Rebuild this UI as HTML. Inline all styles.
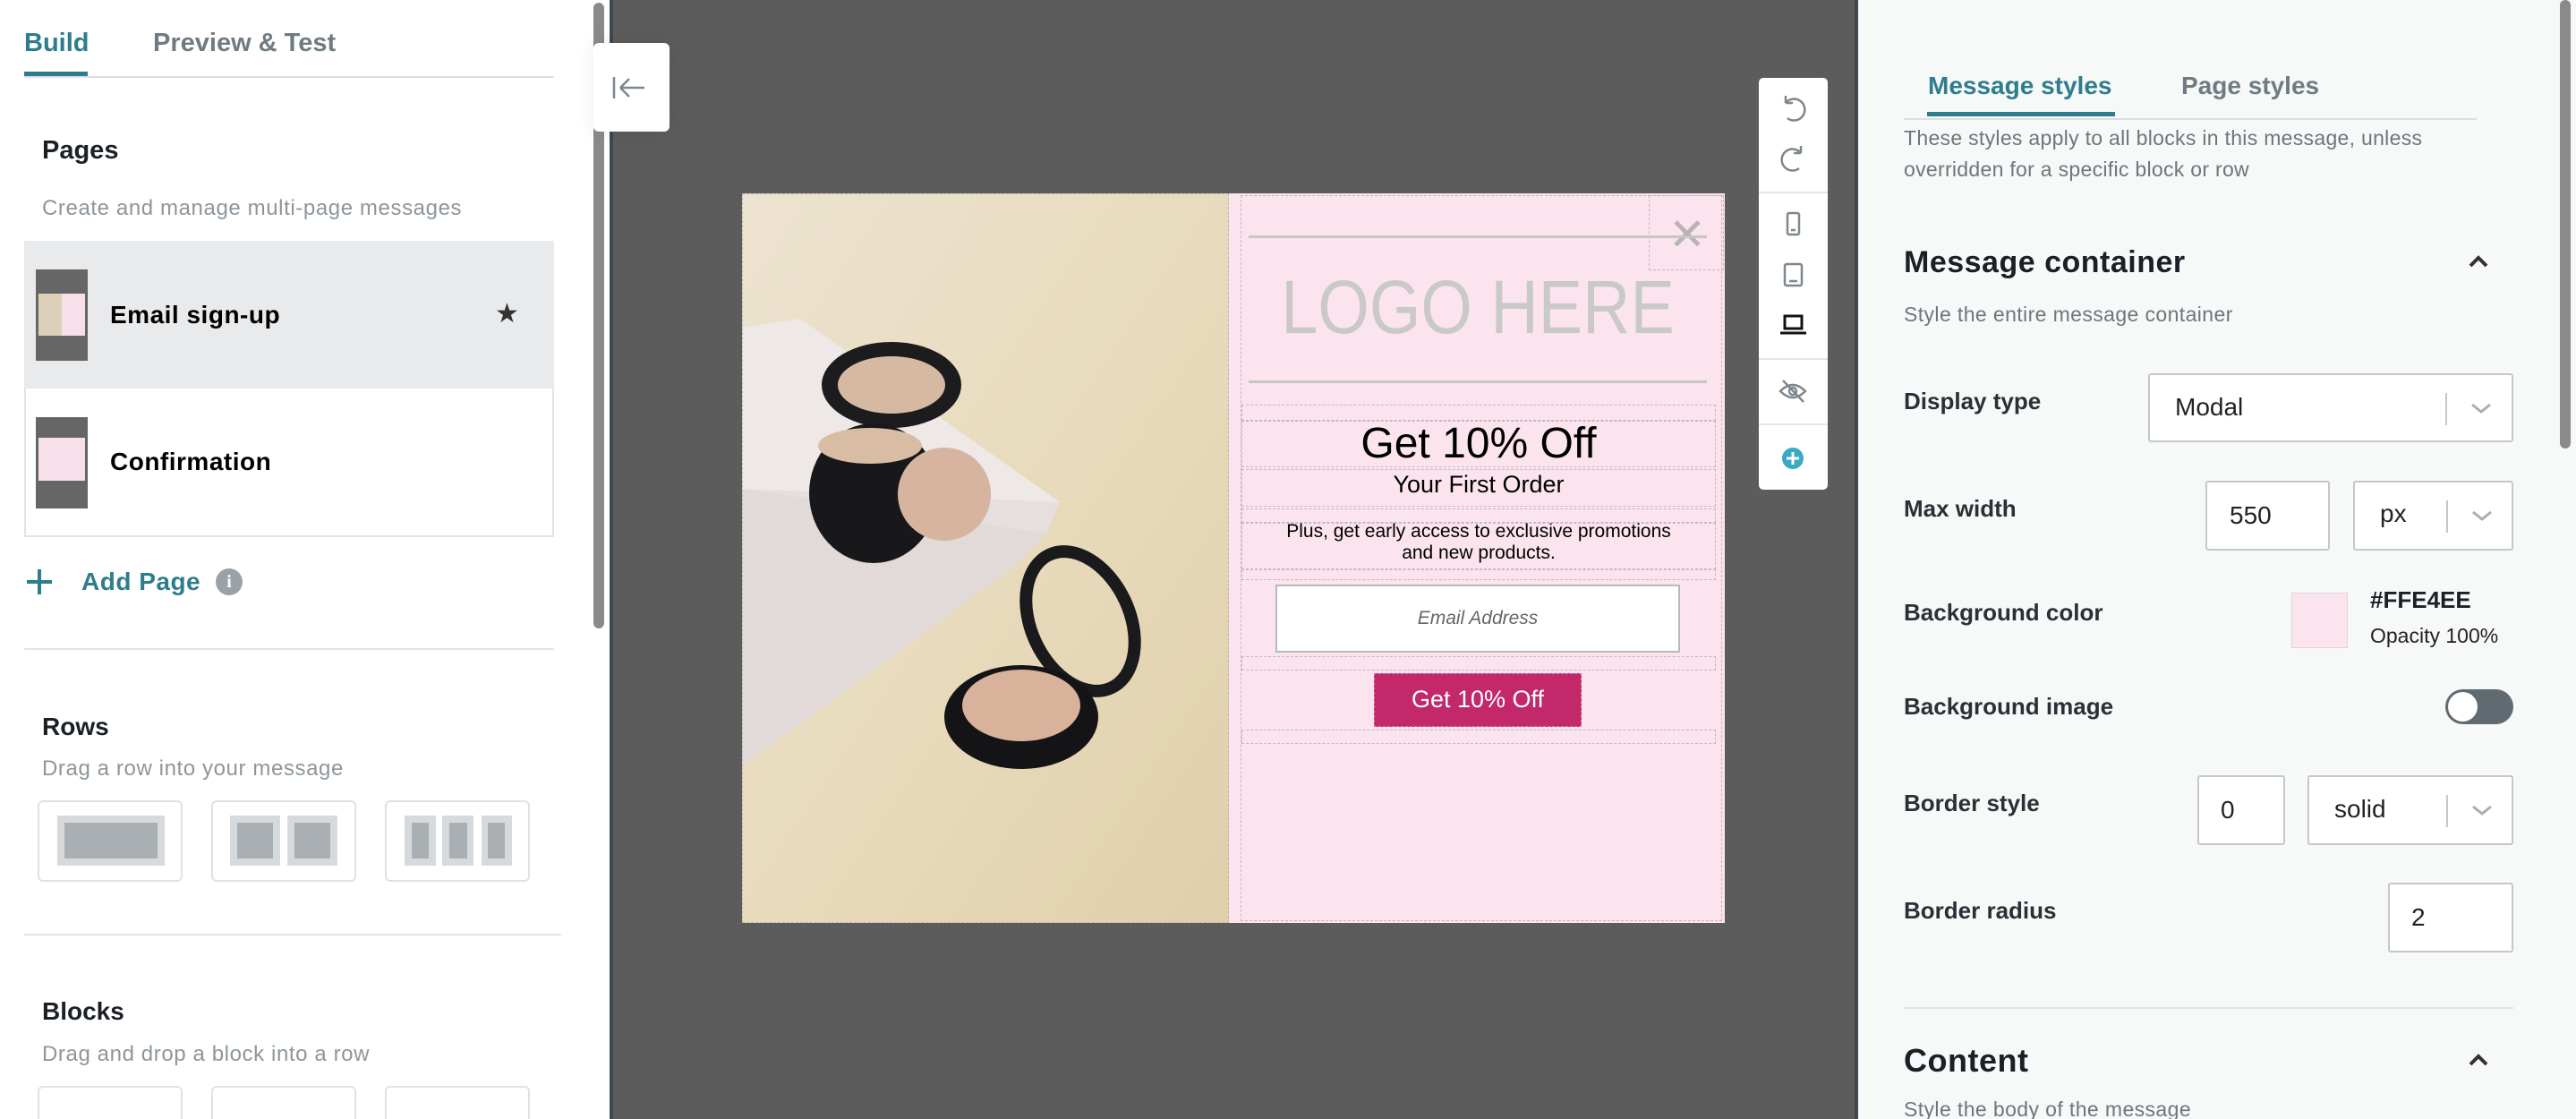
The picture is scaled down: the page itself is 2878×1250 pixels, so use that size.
<!DOCTYPE html>
<html style="width:2878px;height:1250px;overflow:hidden"><head><meta charset="utf-8"><style>
*{margin:0;padding:0;box-sizing:border-box}
body{width:2878px;height:1250px;overflow:hidden;font-family:"Liberation Sans",sans-serif;background:#fff;position:relative}
#wrap{position:absolute;left:0;top:0;width:2878px;height:1250px;overflow:hidden}
.a{position:absolute;white-space:nowrap}
.h{font-weight:bold;color:#1b2025}
.g{color:#8d969c}
.lbl{font-weight:bold;color:#2a3036;font-size:26px}
.box{position:absolute;background:#fff;border:2px solid #c3c8cc;border-radius:3px}
.dash{position:absolute;border:1.5px dashed #c9b6c0}
.l{position:absolute;background:#d7dadc}.d{position:absolute;background:#a9afb3}
</style></head><body><div id="wrap">
<!-- LEFT PANEL -->
<div class="a" style="left:0;top:0;width:681px;height:1250px;background:#fff"></div>
<div class="a h" style="left:27px;top:30px;font-size:29px;line-height:36px;color:#2e7d8c">Build</div>
<div class="a" style="left:171px;top:30px;font-size:29px;line-height:36px;color:#6f7b83;font-weight:bold">Preview &amp; Test</div>
<div class="a" style="left:27px;top:85px;width:592px;height:2px;background:#dcdfe1"></div>
<div class="a" style="left:27px;top:80px;width:71px;height:5px;background:#2e7d8c"></div>
<div class="a h" style="left:47px;top:150px;font-size:29px;line-height:36px">Pages</div>
<div class="a g" style="left:47px;top:218px;font-size:24px;line-height:30px;letter-spacing:0.6px">Create and manage multi-page messages</div>
<div class="a" style="left:27px;top:269px;width:592px;height:165px;background:#e9eaec"></div>
<div class="a" style="left:27px;top:434px;width:592px;height:166px;border:2px solid #e2e4e6;border-top:none"></div>
<div class="a" style="left:40px;top:301px;width:58px;height:102px;background:#666"><div style="position:absolute;left:3px;top:27px;width:52px;height:47px;background:linear-gradient(90deg,#dcd0b8 50%,#f7e0ea 50%)"></div></div>
<div class="a" style="left:40px;top:466px;width:58px;height:102px;background:#666"><div style="position:absolute;left:3px;top:23px;width:52px;height:48px;background:#f7e0ea"></div></div>
<div class="a h" style="left:123px;top:334px;font-size:28px;line-height:36px;color:#000;letter-spacing:0.5px">Email sign-up</div>
<div class="a" style="left:553px;top:333px;font-size:30px;line-height:36px;color:#333">★</div>
<div class="a h" style="left:123px;top:498px;font-size:28px;line-height:36px;color:#000;letter-spacing:0.5px">Confirmation</div>
<div class="a" style="left:30px;top:648px;width:28px;height:4px;background:#2e7d8c"></div>
<div class="a" style="left:42px;top:636px;width:4px;height:28px;background:#2e7d8c"></div>
<div class="a" style="left:91px;top:632px;font-size:28px;line-height:36px;color:#2e7d8c;font-weight:bold;letter-spacing:0.5px">Add Page</div>
<div class="a" style="left:241px;top:635px;width:30px;height:30px;border-radius:50%;background:#9aa2a8;color:#fff;font-size:20px;font-weight:bold;text-align:center;line-height:30px;font-family:'Liberation Serif',serif">i</div>
<div class="a" style="left:27px;top:724px;width:592px;height:2px;background:#e2e4e6"></div>
<div class="a h" style="left:47px;top:794px;font-size:28px;line-height:36px">Rows</div>
<div class="a g" style="left:47px;top:844px;font-size:24px;line-height:30px;letter-spacing:0.6px">Drag a row into your message</div>
<div class="box" style="left:42px;top:894px;width:162px;height:91px;border-color:#dfe2e4;border-radius:6px"><div class="l" style="left:20px;top:15px;width:120px;height:56px"></div><div class="d" style="left:28px;top:23px;width:104px;height:40px"></div></div>
<div class="box" style="left:236px;top:894px;width:162px;height:91px;border-color:#dfe2e4;border-radius:6px"><div class="l" style="left:19px;top:15px;width:56px;height:56px"></div><div class="d" style="left:27px;top:23px;width:40px;height:40px"></div><div class="l" style="left:83px;top:15px;width:56px;height:56px"></div><div class="d" style="left:91px;top:23px;width:40px;height:40px"></div></div>
<div class="box" style="left:430px;top:894px;width:162px;height:91px;border-color:#dfe2e4;border-radius:6px"><div class="l" style="left:20px;top:15px;width:35px;height:56px"></div><div class="d" style="left:28px;top:23px;width:19px;height:40px"></div><div class="l" style="left:62px;top:15px;width:35px;height:56px"></div><div class="d" style="left:70px;top:23px;width:20px;height:40px"></div><div class="l" style="left:106px;top:15px;width:34px;height:56px"></div><div class="d" style="left:113px;top:23px;width:19px;height:40px"></div></div>
<div class="a" style="left:27px;top:1043px;width:600px;height:2px;background:#e2e4e6"></div>
<div class="a h" style="left:47px;top:1112px;font-size:28px;line-height:36px">Blocks</div>
<div class="a g" style="left:47px;top:1163px;font-size:24px;line-height:30px;letter-spacing:0.6px">Drag and drop a block into a row</div>
<div class="box" style="left:42px;top:1213px;width:162px;height:91px;border-color:#dfe2e4;border-radius:6px"></div>
<div class="box" style="left:236px;top:1213px;width:162px;height:91px;border-color:#dfe2e4;border-radius:6px"></div>
<div class="box" style="left:430px;top:1213px;width:162px;height:91px;border-color:#dfe2e4;border-radius:6px"></div>
<div class="a" style="left:663px;top:3px;width:12px;height:699px;background:#8a8a8a;border-radius:6px"></div>

<!-- CANVAS -->
<div class="a" style="left:681px;top:0;width:1395px;height:1250px;background:#5c5c5c;border-left:4px solid #3e4850;border-right:4px solid #3e4850"></div>
<div class="a" style="left:663px;top:48px;width:85px;height:99px;background:#fff;border-radius:6px;box-shadow:0 0 20px rgba(0,0,0,.08)">
<svg width="85" height="99" viewBox="0 0 85 99"><path d="M23 38V62M30 50H57M30 50L40 40M30 50L40 60" stroke="#7e878d" stroke-width="2.5" fill="none"/></svg></div>

<!-- modal -->
<div class="a" style="left:829px;top:216px;width:1098px;height:815px;background:#fbe4ee;overflow:hidden">
<svg class="a" style="left:0;top:0" width="544" height="815" viewBox="0 0 544 815">
<defs><linearGradient id="w" x1="0" y1="0" x2="1" y2="1"><stop offset="0" stop-color="#ece3d0"/><stop offset=".5" stop-color="#e8dbbd"/><stop offset="1" stop-color="#e0cfab"/></linearGradient></defs>
<rect width="544" height="815" fill="url(#w)"/>
<polygon points="0,150 65,140 355,345 340,380 0,640" fill="#e6dfde"/>
<polygon points="0,150 65,140 355,345 0,330" fill="#eee8e7"/>
<polygon points="0,330 340,380 300,420 0,640" fill="#e2dad9"/>
<ellipse cx="167" cy="214" rx="78" ry="48" fill="#1c1c1e"/><ellipse cx="167" cy="214" rx="60" ry="32" fill="#d6b9a2"/>
<ellipse cx="147" cy="335" rx="72" ry="78" fill="#18181a"/><ellipse cx="143" cy="282" rx="58" ry="20" fill="#d9bca4"/>
<circle cx="226" cy="336" r="52" fill="#d6b4a0"/>
<ellipse cx="378" cy="478" rx="55" ry="82" fill="none" stroke="#1a1a1c" stroke-width="14" transform="rotate(-25 378 478)"/>
<ellipse cx="312" cy="585" rx="86" ry="58" fill="#141416"/><ellipse cx="312" cy="572" rx="66" ry="40" fill="#d9b29c"/>
</svg>
<div class="a" style="left:0;top:0;width:544px;height:815px;border:1.5px dashed #bcb8b0"></div>
</div>
<div class="dash" style="left:1386px;top:218px;width:538px;height:811px"></div>
<div class="dash" style="left:1842px;top:218px;width:84px;height:84px"></div>
<div class="a" style="left:1864px;top:240px;font-size:50px;line-height:44px;color:#b8b4b6">✕</div>
<div class="a" style="left:1395px;top:263px;width:512px;height:3px;background:#c8c5c7"></div>
<div class="a" style="left:1395px;top:425px;width:512px;height:3px;background:#c8c5c7"></div>
<div class="a" style="left:1380px;top:296px;width:542px;text-align:center;font-size:84px;line-height:94px;color:#c9c9c9;transform:scaleX(.88)">LOGO HERE</div>
<div class="dash" style="left:1387px;top:452px;width:530px;height:18px"></div>
<div class="dash" style="left:1387px;top:470px;width:530px;height:52px"></div>
<div class="dash" style="left:1387px;top:524px;width:530px;height:42px"></div>
<div class="dash" style="left:1387px;top:568px;width:530px;height:16px"></div>
<div class="dash" style="left:1387px;top:584px;width:530px;height:52px"></div>
<div class="dash" style="left:1387px;top:636px;width:530px;height:12px"></div>
<div class="dash" style="left:1387px;top:733px;width:530px;height:16px"></div>
<div class="dash" style="left:1387px;top:815px;width:530px;height:16px"></div>
<div class="a" style="left:1387px;top:470px;width:530px;text-align:center;font-size:48px;line-height:52px;color:#000">Get 10% Off</div>
<div class="a" style="left:1387px;top:524px;width:530px;text-align:center;font-size:27px;line-height:34px;color:#000">Your First Order</div>
<div class="a" style="left:1387px;top:582px;width:530px;text-align:center;font-size:21px;line-height:24px;color:#000">Plus, get early access to exclusive promotions<br>and new products.</div>
<div class="a" style="left:1425px;top:653px;width:452px;height:76px;background:#fff;border:2px solid #b6babd;text-align:center;line-height:72px;font-size:21px;font-style:italic;color:#666">Email Address</div>
<div class="a" style="left:1535px;top:752px;width:232px;height:60px;background:#c2286a;border:1.5px dashed #e07aa8;text-align:center;line-height:56px;font-size:27px;color:#fff">Get 10% Off</div>

<!-- toolbar -->
<div class="a" style="left:1965px;top:87px;width:77px;height:460px;background:#fff;border-radius:5px">
<svg width="77" height="460" viewBox="0 0 77 460" fill="none" stroke="#7e878d" stroke-width="2.5">
<path d="M30 28 A12 12 0 1 1 32 45 M30 28 V20 M30 28 H38"/>
<path d="M47 84 A12 12 0 1 0 45 101 M47 84 V76 M47 84 H39"/>
<line x1="0" y1="128" x2="77" y2="128" stroke="#e3e6e8" stroke-width="2"/>
<rect x="32" y="151" width="13" height="24" rx="2"/><line x1="36" y1="170" x2="41" y2="170"/>
<rect x="29" y="208" width="19" height="24" rx="2"/><line x1="34" y1="227" x2="43" y2="227"/>
<rect x="29" y="266" width="19" height="14" stroke="#111" stroke-width="3"/><line x1="24" y1="285" x2="53" y2="285" stroke="#111" stroke-width="3"/>
<line x1="0" y1="314" x2="77" y2="314" stroke="#e3e6e8" stroke-width="2"/>
<path d="M24 350 Q38 336 52 350 Q38 364 24 350 Z"/><circle cx="38" cy="350" r="4"/><line x1="27" y1="338" x2="50" y2="362"/>
<line x1="0" y1="387" x2="77" y2="387" stroke="#e3e6e8" stroke-width="2"/>
<circle cx="38" cy="425" r="12" fill="#3aa9c4" stroke="none"/><path d="M38 418V432M31 425H45" stroke="#fff" stroke-width="3"/>
</svg></div>

<!-- RIGHT PANEL -->
<div class="a" style="left:2076px;top:0;width:802px;height:1250px;background:#f7f8f8"></div>
<div class="a" style="left:2154px;top:78px;font-size:28px;line-height:36px;color:#2e7d8c;font-weight:bold">Message styles</div>
<div class="a" style="left:2437px;top:78px;font-size:28px;line-height:36px;color:#6f7b83;font-weight:bold">Page styles</div>
<div class="a" style="left:2127px;top:132px;width:640px;height:2px;background:#dcdfe1"></div>
<div class="a" style="left:2153px;top:125px;width:210px;height:5px;background:#2e7d8c"></div>
<div class="a" style="left:2127px;top:137px;font-size:23px;line-height:35px;color:#6d767c;letter-spacing:.3px">These styles apply to all blocks in this message, unless<br>overridden for a specific block or row</div>
<div class="a h" style="left:2127px;top:272px;font-size:34px;line-height:42px;letter-spacing:.5px">Message container</div>
<div class="a" style="left:2757px;top:282px;width:22px;height:22px"><svg width="24" height="20"><path d="M3 15L12 6L21 15" stroke="#333" stroke-width="4" fill="none"/></svg></div>
<div class="a" style="left:2127px;top:336px;font-size:23px;line-height:30px;color:#6d767c;letter-spacing:.4px">Style the entire message container</div>
<div class="a lbl" style="left:2127px;top:432px;line-height:32px">Display type</div>
<div class="box" style="left:2400px;top:417px;width:408px;height:77px"><span class="a" style="left:28px;top:20px;font-size:28px;color:#222">Modal</span><div class="a" style="left:330px;top:20px;width:2px;height:36px;background:#c3c8cc"></div><svg class="a" style="left:357px;top:28px" width="26" height="18"><path d="M3 5L13 13L23 5" stroke="#a8aeb2" stroke-width="3" fill="none"/></svg></div>
<div class="a lbl" style="left:2127px;top:552px;line-height:32px">Max width</div>
<div class="box" style="left:2464px;top:537px;width:139px;height:78px"><span class="a" style="left:25px;top:21px;font-size:28px;color:#222">550</span></div>
<div class="box" style="left:2629px;top:537px;width:179px;height:78px"><span class="a" style="left:28px;top:19px;font-size:28px;color:#222">px</span><div class="a" style="left:102px;top:20px;width:2px;height:36px;background:#c3c8cc"></div><svg class="a" style="left:129px;top:28px" width="26" height="18"><path d="M3 5L13 13L23 5" stroke="#a8aeb2" stroke-width="3" fill="none"/></svg></div>
<div class="a lbl" style="left:2127px;top:668px;line-height:32px">Background color</div>
<div class="a" style="left:2560px;top:662px;width:63px;height:62px;background:#fbe4ee;border:1.5px solid #e0d4da"></div>
<div class="a h" style="left:2648px;top:655px;font-size:26px;line-height:30px">#FFE4EE</div>
<div class="a" style="left:2648px;top:695px;font-size:23px;line-height:30px;color:#222">Opacity 100%</div>
<div class="a lbl" style="left:2127px;top:773px;line-height:32px">Background image</div>
<div class="a" style="left:2732px;top:770px;width:76px;height:39px;border-radius:20px;background:#606a71"><div style="position:absolute;left:3px;top:3px;width:33px;height:33px;border-radius:50%;background:#fff"></div></div>
<div class="a lbl" style="left:2127px;top:881px;line-height:32px">Border style</div>
<div class="box" style="left:2455px;top:866px;width:98px;height:78px"><span class="a" style="left:24px;top:21px;font-size:28px;color:#222">0</span></div>
<div class="box" style="left:2578px;top:866px;width:230px;height:78px"><span class="a" style="left:28px;top:20px;font-size:28px;color:#222">solid</span><div class="a" style="left:153px;top:20px;width:2px;height:36px;background:#c3c8cc"></div><svg class="a" style="left:180px;top:28px" width="26" height="18"><path d="M3 5L13 13L23 5" stroke="#a8aeb2" stroke-width="3" fill="none"/></svg></div>
<div class="a lbl" style="left:2127px;top:1001px;line-height:32px">Border radius</div>
<div class="box" style="left:2668px;top:986px;width:140px;height:78px"><span class="a" style="left:24px;top:21px;font-size:28px;color:#222">2</span></div>
<div class="a" style="left:2127px;top:1125px;width:681px;height:2px;background:#e0e3e5"></div>
<div class="a h" style="left:2127px;top:1164px;font-size:36px;line-height:42px;letter-spacing:.5px">Content</div>
<div class="a" style="left:2757px;top:1174px"><svg width="24" height="20"><path d="M3 15L12 6L21 15" stroke="#333" stroke-width="4" fill="none"/></svg></div>
<div class="a" style="left:2127px;top:1224px;font-size:23px;line-height:30px;color:#6d767c;letter-spacing:.4px">Style the body of the message</div>
<div class="a" style="left:2860px;top:0;width:12px;height:501px;background:#8a8a8a;border-radius:6px"></div>
</div></body></html>
